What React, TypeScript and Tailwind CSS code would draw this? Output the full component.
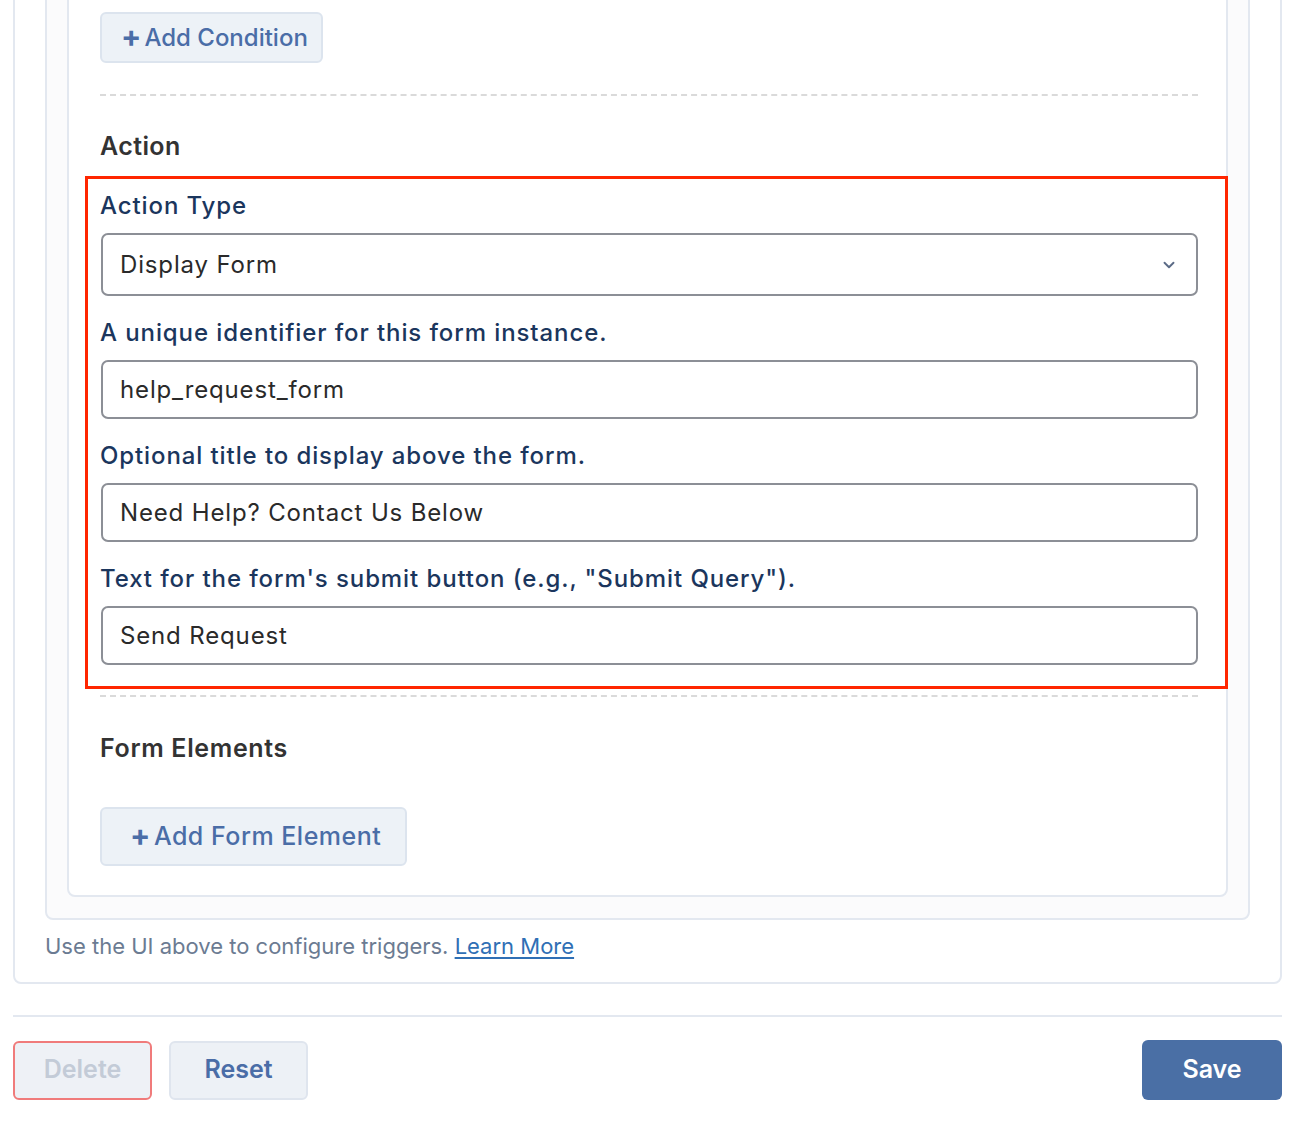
import { ChevronDown } from "lucide-react";

// ── Small pieces ──
function SoftButton({ label, className = "" }: { label: string; className?: string }) {
  return (
    <button
      className={`flex items-center border-2 border-[#dce4ee] bg-[#edf2f7] rounded-[6px] text-[#4a6da7] font-medium leading-none ${className}`}
    >
      <span className="font-bold text-[30px] mr-[3px] -mt-[4px]">+</span>
      {label}
    </button>
  );
}

function FieldLabel({ children }: { children: React.ReactNode }) {
  return (
    <div className="text-[24px] leading-[32px] font-medium tracking-[0.9px] text-[#1b365d] mb-[11px]">{children}</div>
  );
}

function TextField({ value }: { value: string }) {
  return (
    <div className="ml-px h-[59px] flex items-center border-2 border-[#8c8f96] rounded-[7px] pl-[17px] text-[24px] tracking-[0.85px] text-[#2a2a2a]">
      {value}
    </div>
  );
}

export default function App() {
  return (
    <div className="min-h-[1140px] bg-white overflow-hidden font-['Inter','Noto_Sans',sans-serif]">
      <div className="ml-[13px] w-[1269px] -mt-[40px]">
        {/* Outer card */}
        <div className="border-2 border-[#e3e8f0] rounded-[8px] pl-[30px] pr-[30px] pt-[8px] pb-[21px]">
          {/* Middle container */}
          <div className="border-2 border-[#e3e8f0] bg-[#fbfbfc] rounded-[8px] pt-[20px] px-[20px] pb-[21px]">
            {/* Inner card */}
            <div className="border-2 border-[#e3e8f0] bg-white rounded-[8px] pl-[31px] pr-[28px] pt-[18px] pb-[29px]">
              <SoftButton label="Add Condition" className="h-[51px] pl-[19px] pr-[13px] text-[24px]" />

              <div className="mt-[31px] border-t-2 border-dashed border-[#dadada]" />

              <h3 className="mt-[34px] text-[25px] leading-[32px] font-semibold tracking-[0.4px] text-[#333333]">Action</h3>

              {/* Action fields (highlighted) */}
              <div className="relative mt-[28px]">
                <div className="absolute -left-[15px] -right-[30px] -top-[14px] -bottom-[24px] border-[3px] border-[#ff2600] pointer-events-none" />

                <FieldLabel>Action Type</FieldLabel>
                <div className="ml-px h-[63px] flex items-center justify-between border-2 border-[#8c8f96] rounded-[7px] pl-[17px] pr-[18px] text-[24px] tracking-[0.85px] text-[#2a2a2a]">
                  <span>Display Form</span>
                  <ChevronDown className="w-[18px] h-[18px] text-[#5b6b86]" strokeWidth={2.5} />
                </div>

                <div className="mt-[21px]">
                  <FieldLabel>A unique identifier for this form instance.</FieldLabel>
                  <TextField value="help_request_form" />
                </div>

                <div className="mt-[21px]">
                  <FieldLabel>Optional title to display above the form.</FieldLabel>
                  <TextField value="Need Help? Contact Us Below" />
                </div>

                <div className="mt-[21px]">
                  <FieldLabel>Text for the form's submit button (e.g., "Submit Query").</FieldLabel>
                  <TextField value="Send Request" />
                </div>
              </div>

              <div className="mt-[30px] border-t-2 border-dashed border-[#dadada]" />

              <h3 className="mt-[35px] text-[25px] leading-[32px] font-semibold tracking-[0.65px] text-[#333333]">Form Elements</h3>

              <SoftButton label="Add Form Element" className="mt-[43px] h-[59px] pl-[28px] pr-[24px] text-[25px] tracking-[0.5px]" />
            </div>
          </div>

          <p className="mt-[11px] text-[22px] leading-[30px] text-[#6b7b92]">
            Use the UI above to configure triggers.{" "}
            <a href="#" className="text-[#2f6fb5] underline underline-offset-[3px]">Learn More</a>
          </p>
        </div>

        {/* Separator */}
        <div className="mt-[31px] h-[2px] bg-[#e3e8f0]" />

        {/* Footer buttons */}
        <div className="mt-[23px] flex items-center justify-between">
          <div className="flex gap-[17px]">
            <button className="w-[139px] h-[59px] rounded-[6px] border-2 border-[#f07b7b] bg-[#eef1f6] text-[25px] font-semibold text-[#c3cbd7]">
              Delete
            </button>
            <button className="w-[139px] h-[59px] rounded-[6px] border-2 border-[#dfe5ee] bg-[#edf1f6] text-[25px] font-semibold text-[#4a6da7]">
              Reset
            </button>
          </div>
          <button className="w-[140px] h-[60px] rounded-[6px] bg-[#4a6fa5] text-[25px] font-semibold text-white">
            Save
          </button>
        </div>
      </div>
    </div>
  );
}
